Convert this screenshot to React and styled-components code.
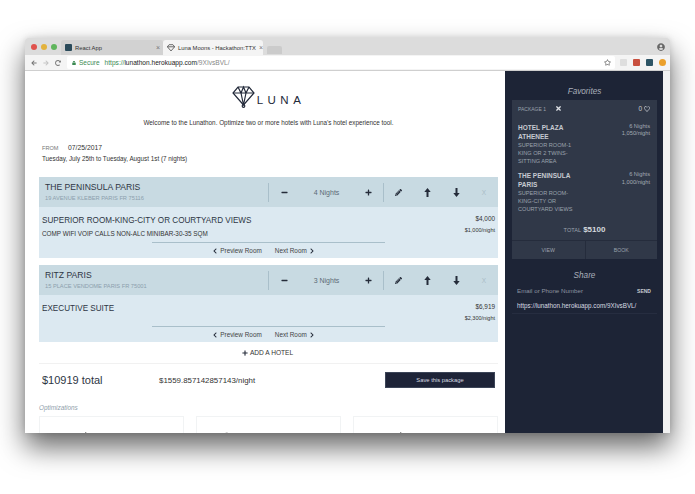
import React from 'react';
import styled, { createGlobalStyle } from 'styled-components';
import {
  FaMinus, FaPlus, FaPencilAlt, FaChevronLeft, FaChevronRight,
  FaTimes, FaRegHeart, FaRegStar, FaLock, FaArrowLeft, FaArrowRight, FaRedoAlt, FaUserCircle, FaPlane, FaUmbrellaBeach,
} from 'react-icons/fa';

const GlobalStyle = createGlobalStyle`
  html, body { margin: 0; padding: 0; background: #fff; height: 100%; overflow: hidden; }
  body { font-family: "Liberation Sans", Arial, sans-serif; }
  * { box-sizing: border-box; }
`;

const Page = styled.div`
  width: 695px;
  height: 494px;
  padding: 38px 25px 61px;
  overflow: hidden;
`;

const Window = styled.div`
  width: 645px;
  height: 395px;
  display: flex;
  flex-direction: column;
  overflow: hidden;
  border-radius: 3px 3px 0 0;
  box-shadow: 0 14px 28px rgba(0, 0, 0, 0.6), 0 0 6px rgba(0, 0, 0, 0.12);
`;

const TabBar = styled.div`
  height: 17px;
  flex: none;
  display: flex;
  align-items: flex-end;
  background: #dcdcdc;
  padding-left: 6px;
`;

const Lights = styled.div`
  display: flex;
  gap: 4px;
  align-self: center;
  margin-right: 4px;
`;

const Light = styled.span`
  width: 6px;
  height: 6px;
  border-radius: 50%;
  background: ${({ $color }) => $color};
`;

const Tab = styled.div`
  width: ${({ $width }) => $width}px;
  height: 15px;
  display: flex;
  align-items: center;
  gap: 3px;
  padding: 0 3px 0 4px;
  font-size: 5.85px;
  font-weight: 500;
  color: #333;
  background: ${({ $active }) => ($active ? '#f4f4f4' : '#d2d2d2')};
  border-radius: 3px 3px 0 0;
`;

const TabTitle = styled.span`
  flex: 1;
  white-space: nowrap;
`;

const TabClose = styled.span`
  font-size: 7px;
  color: #777;
`;

const Favicon = styled.span`
  width: 7px;
  height: 7px;
  flex: none;
  background: #2a4a5a;
  border-radius: 1px;
`;

const TabDiamond = styled.svg`
  width: 8px;
  height: 8px;
  flex: none;
`;

const NewTab = styled.div`
  width: 15px;
  height: 8px;
  margin-left: 4px;
  margin-bottom: 1px;
  background: #cbcbcb;
  border-radius: 2px 2px 0 0;
`;

const Avatar = styled.div`
  margin-left: auto;
  margin-right: 5px;
  align-self: center;
  display: flex;
  color: #666;
  font-size: 8px;
`;

const Toolbar = styled.div`
  height: 16px;
  flex: none;
  display: flex;
  align-items: center;
  background: #f4f4f4;
  border-bottom: 1px solid #cfcfcf;
  padding: 0 4px 0 6px;
  color: #777;
  font-size: 6px;
`;

const NavIcons = styled.div`
  display: flex;
  align-items: center;
  gap: 6px;
  margin-right: 6px;
`;

const Omnibox = styled.div`
  flex: 1;
  height: 13px;
  display: flex;
  align-items: center;
  background: #fff;
  border-radius: 2px;
  padding: 0 4px 0 5px;
  font-size: 6.6px;
`;

const Secure = styled.span`
  display: flex;
  align-items: center;
  gap: 3px;
  color: #3b8a52;
  margin-right: 5px;
  font-size: 6.5px;
`;

const UrlPart = styled.span`
  color: ${({ $color }) => $color};
`;

const Url = styled.span`
  display: flex;
`;

const StarWrap = styled.span`
  margin-left: auto;
  display: flex;
  color: #666;
  font-size: 7px;
`;

const Extensions = styled.div`
  display: flex;
  align-items: center;
  gap: 6px;
  margin-left: 5px;
`;

const Ext = styled.span`
  width: 7px;
  height: 7px;
  border-radius: ${({ $round }) => ($round ? '50%' : '1px')};
  background: ${({ $color }) => $color};
`;

const Content = styled.div`
  flex: 1;
  min-height: 0;
  display: flex;
  background: #fff;
`;

const Main = styled.main`
  width: 480px;
  flex: none;
  padding: 0 7px 0 14px;
  overflow: hidden;
`;

const Logo = styled.div`
  display: flex;
  justify-content: center;
  align-items: flex-end;
  gap: 2px;
  padding-top: 14px;
  height: 37px;
`;

const LogoWord = styled.span`
  font-size: 11.5px;
  letter-spacing: 4.5px;
  color: #232a3a;
  line-height: 14px;
  margin-bottom: 1px;
`;

const Welcome = styled.p`
  margin: 10px 0 0;
  font-size: 6.35px;
  color: #333;
  text-align: center;
  line-height: 10px;
`;

const FromRow = styled.div`
  display: flex;
  align-items: center;
  margin: 15px 0 0 3px;
  font-size: 6.8px;
  color: #333;
  line-height: 10px;
`;

const FromLabel = styled.span`
  width: 26px;
  font-size: 5.6px;
  color: #777;
`;

const Range = styled.div`
  margin: 1px 0 0 3px;
  font-size: 6.3px;
  color: #333;
  line-height: 10px;
`;

const HotelCard = styled.section`
  margin-top: ${({ $first }) => ($first ? '13px' : '7px')};
  background: #dce9f1;
`;

const HotelHeader = styled.div`
  height: 30px;
  display: flex;
  align-items: center;
  background: #c8dae2;
`;

const HotelTitle = styled.div`
  width: 229px;
  flex: none;
  padding-left: 6px;
`;

const HotelName = styled.div`
  font-size: 8.6px;
  line-height: 11px;
  color: #2e3644;
`;

const HotelAddress = styled.div`
  font-size: 5.7px;
  color: #8ca0ad;
  line-height: 8px;
  margin-top: 1px;
`;

const NightControl = styled.div`
  width: 116px;
  height: 19px;
  flex: none;
  display: flex;
  align-items: center;
  justify-content: space-between;
  padding: 0 11px 0 12px;
  border-left: 1px solid #a9bfca;
  border-right: 1px solid #a9bfca;
  font-size: 7px;
  color: #5c6b76;
`;

const IconButton = styled.span`
  display: flex;
  color: #252c3a;
  font-size: 7px;
`;

const Actions = styled.div`
  flex: 1;
  display: flex;
  align-items: center;
  justify-content: space-between;
  padding: 0 12px 0 11px;
`;

const MutedX = styled.span`
  font-size: 6.5px;
  color: #a9bcc6;
`;

const HotelBody = styled.div`
  height: ${({ $height }) => $height}px;
  display: flex;
  flex-direction: column;
  padding: 8px 3px 0 3px;
`;

const RoomTop = styled.div`
  display: flex;
  justify-content: space-between;
`;

const RoomName = styled.div`
  font-size: 8.15px;
  line-height: 12px;
  color: #2e3644;
`;

const RoomDesc = styled.div`
  font-size: 6.35px;
  color: #333;
  line-height: 8px;
  margin-top: 3px;
`;

const Prices = styled.div`
  text-align: right;
  color: #333;
`;

const Price = styled.div`
  font-size: 6.4px;
  line-height: 8px;
`;

const PerNight = styled.div`
  font-size: 5.5px;
  line-height: 8px;
  margin-top: 3px;
`;

const RoomNav = styled.div`
  margin: auto 0 0 110px;
  width: 233px;
  height: 16px;
  border-top: 1px solid #a9bfca;
  display: flex;
  justify-content: center;
  align-items: center;
  gap: 13px;
  font-size: 6.4px;
  color: #444;
  padding-right: 10px;
`;

const RoomLink = styled.span`
  display: flex;
  align-items: center;
  gap: 2px;
`;

const AddHotel = styled.div`
  height: 22px;
  display: flex;
  align-items: center;
  justify-content: center;
  gap: 2px;
  font-size: 6.6px;
  color: #333;
  border-bottom: 1px solid #f1f1f1;
  padding-right: 2px;
`;

const Totals = styled.div`
  display: flex;
  align-items: center;
  height: 32px;
  padding: 0 3px;
`;

const Total = styled.div`
  width: 117px;
  font-size: 11px;
  color: #2e3644;
`;

const Nightly = styled.div`
  flex: 1;
  font-size: 7.9px;
  color: #333;
`;

const SaveButton = styled.button`
  width: 110px;
  height: 16px;
  border: 1px solid #3c4558;
  background: #1e2438;
  color: #d9dce2;
  font: 5.8px "Liberation Sans", Arial, sans-serif;
  padding: 0;
`;

const SectionLabel = styled.div`
  margin-top: 8px;
  font-size: 6.4px;
  font-style: italic;
  color: #8fa0ab;
  line-height: 8px;
`;

const Options = styled.div`
  display: grid;
  grid-template-columns: repeat(3, 145px);
  justify-content: space-between;
  margin-top: 4px;
`;

const Option = styled.div`
  height: 40px;
  border: 1px solid #f1f3f4;
  display: flex;
  justify-content: center;
  gap: 4px;
  padding-top: 15px;
  font-size: 7px;
  letter-spacing: 1.2px;
  color: #555;
  & > svg { color: #222; }
`;

const Sidebar = styled.aside`
  width: 158px;
  flex: none;
  background: #1d2436;
  padding: 0 6px 0 7px;
  color: #b9bec7;
`;

const SideTitle = styled.h3`
  margin: ${({ $top }) => $top}px 0 0;
  font-size: 8.2px;
  font-weight: 400;
  font-style: italic;
  text-align: center;
  color: #a9afba;
  line-height: 12px;
`;

const Package = styled.div`
  margin-top: 2px;
  background: #303848;
`;

const PackageHead = styled.div`
  display: flex;
  align-items: center;
  height: 16px;
  padding: 1px 7px 0 6px;
  font-size: 5px;
  color: #9ba2ad;
`;

const CloseIcon = styled.span`
  display: flex;
  margin-left: 9px;
  font-size: 7px;
  color: #dfe2e6;
`;

const Likes = styled.span`
  margin-left: auto;
  display: flex;
  align-items: center;
  gap: 2px;
  font-size: 6.5px;
  color: #c7cbd2;
`;

const PackageItem = styled.div`
  display: flex;
  justify-content: space-between;
  padding: 0 7px 0 6px;
  margin-top: 6.5px;
`;

const ItemLeft = styled.div`
  width: 60px;
`;

const ItemName = styled.div`
  font-size: 6.5px;
  line-height: 9px;
  font-weight: 700;
  color: #c6cad1;
`;

const ItemRoom = styled.div`
  font-size: 5.6px;
  line-height: 8px;
  color: #9ba2ad;
`;

const ItemRight = styled.div`
  font-size: 5.7px;
  line-height: 7.5px;
  text-align: right;
  color: #a4abb5;
`;

const PackageTotal = styled.div`
  display: flex;
  justify-content: center;
  align-items: baseline;
  gap: 2px;
  margin-top: 12px;
  height: 15px;
  font-size: 5.6px;
  color: #9ba2ad;
`;

const TotalValue = styled.span`
  font-size: 8px;
  font-weight: 700;
  color: #d5d8de;
`;

const PackageActions = styled.div`
  height: 19px;
  display: grid;
  grid-template-columns: 1fr 1fr;
  border-top: 1px solid #252c3c;
`;

const PackageAction = styled.div`
  display: flex;
  align-items: center;
  justify-content: center;
  font-size: 5.2px;
  color: #9ba2ad;
  & + & { border-left: 1px solid #252c3c; }
`;

const ShareRow = styled.div`
  display: flex;
  justify-content: space-between;
  align-items: center;
  margin-top: 5px;
  padding: 0 6px 0 5px;
  font-size: 6.2px;
  color: #8c93a0;
  line-height: 8px;
`;

const SendLabel = styled.span`
  font-size: 5px;
  font-weight: 700;
  color: #c6cad1;
`;

const ShareUrl = styled.div`
  margin-top: 7px;
  padding: 0 5px 3px;
  font-size: 6.3px;
  line-height: 8px;
  color: #d9dce2;
  border-bottom: 1px solid #262d40;
`;

const Scrollbar = styled.div`
  flex: 1;
  background: #f1f1f1;
`;

const hotels = [
  {
    name: 'THE PENINSULA PARIS', address: '19 AVENUE KLEBER PARIS FR 75116', nights: '4 Nights',
    room: 'SUPERIOR ROOM-KING-CITY OR COURTYARD VIEWS', desc: 'COMP WIFI VOIP CALLS NON-ALC MINIBAR-30-35 SQM',
    price: '$4,000', perNight: '$1,000/night', height: 51,
  },
  {
    name: 'RITZ PARIS', address: '15 PLACE VENDOME PARIS FR 75001', nights: '3 Nights',
    room: 'EXECUTIVE SUITE', desc: '', price: '$6,919', perNight: '$2,300/night', height: 47,
  },
];

const favorites = [
  { name: 'HOTEL PLAZA ATHENEE', room: 'SUPERIOR ROOM-1 KING OR 2 TWINS-SITTING AREA', nights: '6 Nights', rate: '1,050/night' },
  { name: 'THE PENINSULA PARIS', room: 'SUPERIOR ROOM-KING-CITY OR COURTYARD VIEWS', nights: '6 Nights', rate: '1,000/night' },
];

const Diamond = () => (
  <svg width="23" height="23" viewBox="0 0 23 23" fill="none" stroke="#232a3a" strokeWidth="1.2">
    <path d="M6 2h11l5 6-10.5 12L1 8z" />
    <path d="M1 8h21M6 2l3 6 2.5-6 2.5 6 3-6M9 8l2.5 12L14 8" />
    <circle cx="11.5" cy="21" r="1.3" />
  </svg>
);

// glyphicon style arrow, the icon packs only have thinner ones
const Arrow = ({ down }) => (
  <svg width="7" height="9" viewBox="0 0 7 9" fill="currentColor">
    <path d={down ? 'M3.5 9L0.3 5H2.5V0H4.5V5H6.7z' : 'M3.5 0L6.7 4H4.5V9H2.5V4H0.3z'} />
  </svg>
);

const App = () => (
  <Page>
    <GlobalStyle />
    <Window>
      <TabBar>
        <Lights>
          <Light $color="#e0524d" />
          <Light $color="#e3b23c" />
          <Light $color="#5fb55c" />
        </Lights>
        <Tab $width={102}>
          <Favicon />
          <TabTitle>React App</TabTitle>
          <TabClose>×</TabClose>
        </Tab>
        <Tab $active $width={100}>
          <TabDiamond viewBox="0 0 23 23" fill="none" stroke="#333" strokeWidth="2">
            <path d="M6 2h11l5 6-10.5 12L1 8zM1 8h21" />
          </TabDiamond>
          <TabTitle>Luna Moons - Hackathon:TTX</TabTitle>
          <TabClose>×</TabClose>
        </Tab>
        <NewTab />
        <Avatar><FaUserCircle /></Avatar>
      </TabBar>
      <Toolbar>
        <NavIcons>
          <FaArrowLeft />
          <FaArrowRight color="#c4c4c4" />
          <FaRedoAlt />
        </NavIcons>
        <Omnibox>
          <Secure><FaLock size={4} />Secure</Secure>
          <Url>
            <UrlPart $color="#3b8a52">https://</UrlPart>
            <UrlPart $color="#222">lunathon.herokuapp.com</UrlPart>
            <UrlPart $color="#888">/9XIvsBVL/</UrlPart>
          </Url>
          <StarWrap><FaRegStar /></StarWrap>
        </Omnibox>
        <Extensions>
          <Ext $color="#dedede" />
          <Ext $color="#c8503f" />
          <Ext $color="#2e5566" />
          <Ext $color="#eba02b" $round />
        </Extensions>
      </Toolbar>
      <Content>
        <Main>
          <Logo>
            <Diamond />
            <LogoWord>LUNA</LogoWord>
          </Logo>
          <Welcome>Welcome to the Lunathon. Optimize two or more hotels with Luna's hotel experience tool.</Welcome>
          <FromRow><FromLabel>FROM</FromLabel>07/25/2017</FromRow>
          <Range>Tuesday, July 25th to Tuesday, August 1st (7 nights)</Range>
          {hotels.map((hotel, i) => (
            <HotelCard key={hotel.name} $first={i === 0}>
              <HotelHeader>
                <HotelTitle>
                  <HotelName>{hotel.name}</HotelName>
                  <HotelAddress>{hotel.address}</HotelAddress>
                </HotelTitle>
                <NightControl>
                  <IconButton><FaMinus /></IconButton>
                  {hotel.nights}
                  <IconButton><FaPlus /></IconButton>
                </NightControl>
                <Actions>
                  <IconButton><FaPencilAlt /></IconButton>
                  <IconButton><Arrow /></IconButton>
                  <IconButton><Arrow down /></IconButton>
                  <MutedX>X</MutedX>
                </Actions>
              </HotelHeader>
              <HotelBody $height={hotel.height}>
                <RoomTop>
                  <div>
                    <RoomName>{hotel.room}</RoomName>
                    {hotel.desc && <RoomDesc>{hotel.desc}</RoomDesc>}
                  </div>
                  <Prices>
                    <Price>{hotel.price}</Price>
                    <PerNight>{hotel.perNight}</PerNight>
                  </Prices>
                </RoomTop>
                <RoomNav>
                  <RoomLink><FaChevronLeft size={6} color="#252c3a" />Preview Room</RoomLink>
                  <RoomLink>Next Room<FaChevronRight size={6} color="#252c3a" /></RoomLink>
                </RoomNav>
              </HotelBody>
            </HotelCard>
          ))}
          <AddHotel><FaPlus size={6} color="#252c3a" />ADD A HOTEL</AddHotel>
          <Totals>
            <Total>$10919 total</Total>
            <Nightly>$1559.857142857143/night</Nightly>
            <SaveButton>Save this package</SaveButton>
          </Totals>
          <SectionLabel>Optimizations</SectionLabel>
          <Options>
            <Option><FaPlane />VERY LOW</Option>
            <Option><FaUmbrellaBeach />BEACH BOUTIQUE</Option>
            <Option><FaPlane />3 HOTELS</Option>
          </Options>
        </Main>
        <Sidebar>
          <SideTitle $top={15}>Favorites</SideTitle>
          <Package>
            <PackageHead>
              PACKAGE 1
              <CloseIcon><FaTimes /></CloseIcon>
              <Likes>0 <FaRegHeart size={6} /></Likes>
            </PackageHead>
            {favorites.map((fav) => (
              <PackageItem key={fav.name}>
                <ItemLeft>
                  <ItemName>{fav.name}</ItemName>
                  <ItemRoom>{fav.room}</ItemRoom>
                </ItemLeft>
                <ItemRight>{fav.nights}<br />{fav.rate}</ItemRight>
              </PackageItem>
            ))}
            <PackageTotal>TOTAL <TotalValue>$5100</TotalValue></PackageTotal>
            <PackageActions>
              <PackageAction>VIEW</PackageAction>
              <PackageAction>BOOK</PackageAction>
            </PackageActions>
          </Package>
          <SideTitle $top={11}>Share</SideTitle>
          <ShareRow>Email or Phone Number<SendLabel>SEND</SendLabel></ShareRow>
          <ShareUrl>https://lunathon.herokuapp.com/9XIvsBVL/</ShareUrl>
        </Sidebar>
        <Scrollbar />
      </Content>
    </Window>
  </Page>
);

export default App;
